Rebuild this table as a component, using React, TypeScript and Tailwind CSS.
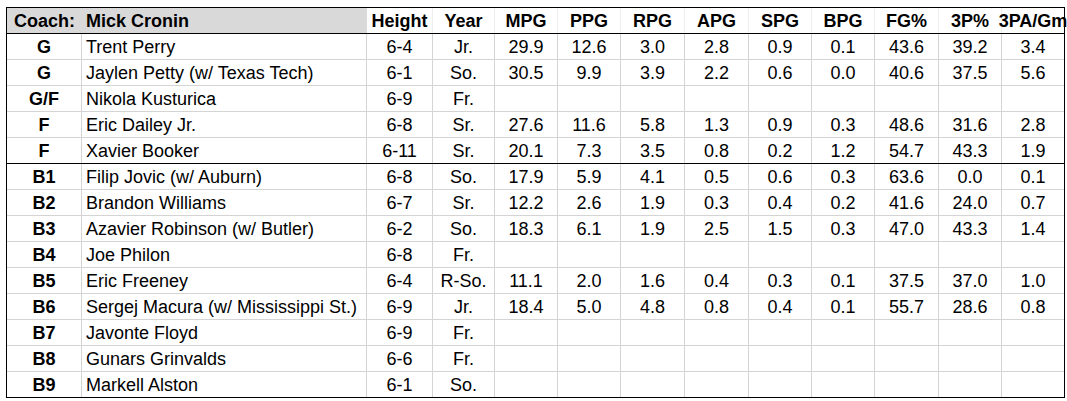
import React from "react"

const COLS = "grid grid-cols-[75px_285px_66px_62px_63px_63px_64px_64px_63px_63px_64px_63px_62px]"

const STATS = ["MPG", "PPG", "RPG", "APG", "SPG", "BPG", "FG%", "3P%", "3PA/Gm"]

type Player = {
  pos: string
  name: string
  height: string
  year: string
  stats: string[]
}

const PLAYERS: Player[] = [
  { pos: "G", name: "Trent Perry", height: "6-4", year: "Jr.", stats: ["29.9", "12.6", "3.0", "2.8", "0.9", "0.1", "43.6", "39.2", "3.4"] },
  { pos: "G", name: "Jaylen Petty (w/ Texas Tech)", height: "6-1", year: "So.", stats: ["30.5", "9.9", "3.9", "2.2", "0.6", "0.0", "40.6", "37.5", "5.6"] },
  { pos: "G/F", name: "Nikola Kusturica", height: "6-9", year: "Fr.", stats: [] },
  { pos: "F", name: "Eric Dailey Jr.", height: "6-8", year: "Sr.", stats: ["27.6", "11.6", "5.8", "1.3", "0.9", "0.3", "48.6", "31.6", "2.8"] },
  { pos: "F", name: "Xavier Booker", height: "6-11", year: "Sr.", stats: ["20.1", "7.3", "3.5", "0.8", "0.2", "1.2", "54.7", "43.3", "1.9"] },
  { pos: "B1", name: "Filip Jovic (w/ Auburn)", height: "6-8", year: "So.", stats: ["17.9", "5.9", "4.1", "0.5", "0.6", "0.3", "63.6", "0.0", "0.1"] },
  { pos: "B2", name: "Brandon Williams", height: "6-7", year: "Sr.", stats: ["12.2", "2.6", "1.9", "0.3", "0.4", "0.2", "41.6", "24.0", "0.7"] },
  { pos: "B3", name: "Azavier Robinson (w/ Butler)", height: "6-2", year: "So.", stats: ["18.3", "6.1", "1.9", "2.5", "1.5", "0.3", "47.0", "43.3", "1.4"] },
  { pos: "B4", name: "Joe Philon", height: "6-8", year: "Fr.", stats: [] },
  { pos: "B5", name: "Eric Freeney", height: "6-4", year: "R-So.", stats: ["11.1", "2.0", "1.6", "0.4", "0.3", "0.1", "37.5", "37.0", "1.0"] },
  { pos: "B6", name: "Sergej Macura (w/ Mississippi St.)", height: "6-9", year: "Jr.", stats: ["18.4", "5.0", "4.8", "0.8", "0.4", "0.1", "55.7", "28.6", "0.8"] },
  { pos: "B7", name: "Javonte Floyd", height: "6-9", year: "Fr.", stats: [] },
  { pos: "B8", name: "Gunars Grinvalds", height: "6-6", year: "Fr.", stats: [] },
  { pos: "B9", name: "Markell Alston", height: "6-1", year: "So.", stats: [] },
]

function Row({ p, idx }: { p: Player; idx: number }) {
  const last = idx === PLAYERS.length - 1
  // thick rule between starters and bench
  const rowBorder = last
    ? "h-[25px]"
    : idx === 4
      ? "h-[26px] border-b border-black"
      : "h-[26px] border-b border-[#d4d4d4]"
  const cell = "flex items-center border-r border-[#d4d4d4]"

  return (
    <div className={`${COLS} ${rowBorder}`}>
      <div className={`${cell} justify-center font-bold`}>{p.pos}</div>
      <div className={`${cell} pl-[4px] whitespace-nowrap`}>{p.name}</div>
      <div className={`${cell} justify-center`}>{p.height}</div>
      <div className={`${cell} justify-center`}>{p.year}</div>
      {STATS.map((s, i) => (
        <div
          key={s}
          className={`flex items-center justify-center ${i < STATS.length - 1 ? "border-r border-[#d4d4d4]" : ""}`}
        >
          {p.stats[i] ?? ""}
        </div>
      ))}
    </div>
  )
}

export default function App() {
  return (
    <div className="min-h-[401px] bg-white pl-[6px] pt-[7px] font-['Liberation_Sans',Arial,sans-serif] text-[18px] leading-none text-black">
      <div className="w-[1059px] border border-black">
        {/* Header */}
        <div className={`${COLS} h-[26px] border-b border-black font-bold`}>
          <div className="flex items-center bg-[#d9d9d9] pl-[7px]">Coach:</div>
          <div className="flex items-center bg-[#d9d9d9] pl-[4px]">Mick Cronin</div>
          <div className="flex items-center justify-center border-r border-[#eeeeee]">Height</div>
          <div className="flex items-center justify-center border-r border-[#eeeeee]">Year</div>
          {STATS.map((s, i) => (
            <div
              key={s}
              className={`flex items-center justify-center ${i < STATS.length - 1 ? "border-r border-[#eeeeee]" : ""}`}
            >
              {s}
            </div>
          ))}
        </div>

        {PLAYERS.map((p, i) => (
          <Row key={p.name} p={p} idx={i} />
        ))}
      </div>
    </div>
  )
}
